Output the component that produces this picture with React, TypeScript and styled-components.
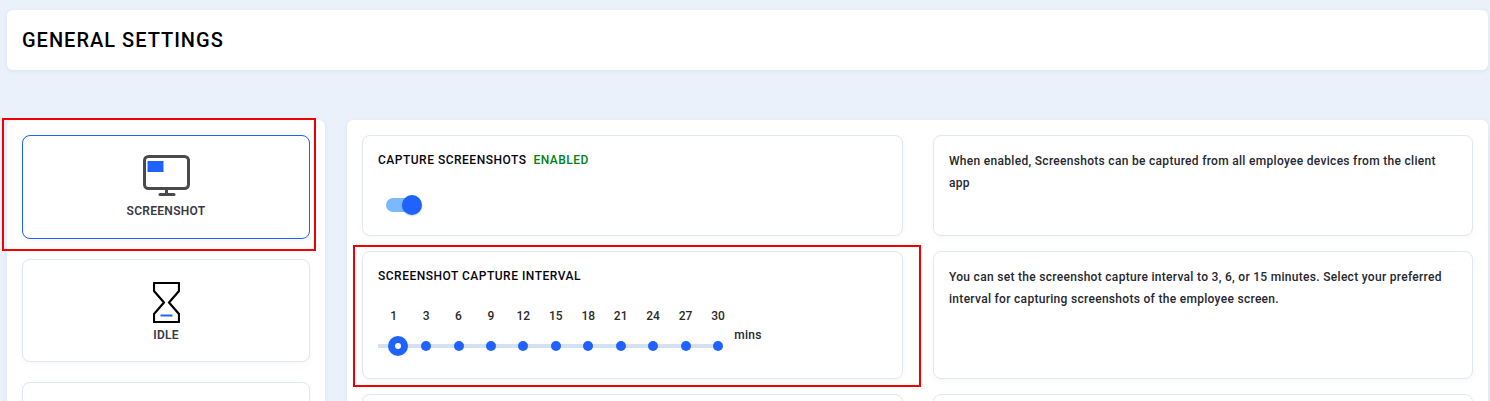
import React from 'react';
import styled, { createGlobalStyle } from 'styled-components';

const Global = createGlobalStyle`
  html, body { margin: 0; padding: 0; height: 401px; overflow: hidden; background: #eaf1fb; }
  body { font-family: Roboto, "Liberation Sans", sans-serif; }
  * { box-sizing: border-box; }
`;

const Page = styled.div`
  position: relative;
  padding: 10px 2px 0 7px;
  height: 401px;
  overflow: hidden;
`;

const Header = styled.header`
  height: 60px;
  background: #fff;
  border-radius: 6px;
  box-shadow: 0 1px 4px rgba(90, 120, 180, 0.12);
  display: flex;
  align-items: center;
  padding-left: 15px;
  margin-bottom: 50px;
`;

const Title = styled.h1`
  margin: 0;
  font-size: 20px;
  font-weight: 500;
  letter-spacing: 1px;
  color: #000;
`;

const Columns = styled.div`
  display: flex;
  gap: 22px;
  align-items: flex-start;
`;

const SidePanel = styled.aside`
  width: 318px;
  flex: none;
  background: #fff;
  border-radius: 6px;
  padding: 15px;
  display: flex;
  flex-direction: column;
  gap: 20px;
  box-shadow: 0 1px 4px rgba(90, 120, 180, 0.1);
`;

const NavCard = styled.div<{ $active?: boolean; $h: number; $pt: number }>`
  height: ${(p) => p.$h}px;
  padding-top: ${(p) => p.$pt}px;
  border: 1px solid ${(p) => (p.$active ? '#1f62ff' : '#e0e6f2')};
  border-radius: 8px;
  background: #fff;
  display: flex;
  flex-direction: column;
  align-items: center;
  box-shadow: 0 2px 6px rgba(90, 120, 180, 0.05);
`;

const NavLabel = styled.span<{ $mt: number }>`
  margin-top: ${(p) => p.$mt}px;
  font-size: 12px;
  line-height: 14px;
  font-weight: 600;
  letter-spacing: 0.3px;
  color: #3a3a3f;
`;

const MainPanel = styled.main`
  flex: 1;
  background: #fff;
  border-radius: 6px;
  padding: 15px;
  display: grid;
  grid-template-columns: 541px 540px;
  column-gap: 30px;
  row-gap: 15px;
  box-shadow: 0 1px 4px rgba(90, 120, 180, 0.1);
`;

const Card = styled.section<{ $h: number }>`
  height: ${(p) => p.$h}px;
  border: 1px solid #e0e6f2;
  border-radius: 8px;
  background: #fff;
  padding: 17px 15px 0;
  box-shadow: 0 2px 6px rgba(90, 120, 180, 0.05);
`;

const CardTitle = styled.div`
  display: flex;
  gap: 7px;
  font-size: 12px;
  line-height: 14px;
  font-weight: 500;
  letter-spacing: 0.5px;
  color: #050510;
`;

const Status = styled.span`
  color: #008018;
`;

const Description = styled.p`
  margin: -2px 0 0;
  font-size: 12px;
  line-height: 21.6px;
  font-weight: 500;
  letter-spacing: 0.3px;
  color: #26272f;
`;

const SwitchTrack = styled.div`
  position: relative;
  width: 32px;
  height: 14px;
  margin: 31px 0 0 8px;
  border-radius: 7px;
  background: #7ab8ff;
`;

const SwitchThumb = styled.div`
  position: absolute;
  left: 16px;
  top: -3px;
  width: 20px;
  height: 20px;
  border-radius: 50%;
  background: #1f62ff;
  box-shadow: 0 1px 2px rgba(0, 0, 0, 0.2);
`;

const SliderRow = styled.div`
  display: flex;
  align-items: flex-start;
  margin: 26px 0 0 -0.6px;
`;

const Marks = styled.div`
  display: flex;
  background: linear-gradient(#d6e0f3, #d6e0f3) no-repeat;
  background-size: 340px 4px;
  background-position: 0.6px 35px;
`;

const Mark = styled.div`
  width: 32.45px;
  display: flex;
  flex-direction: column;
  align-items: center;
`;

const MarkLabel = styled.span`
  font-size: 12px;
  line-height: 14px;
  font-weight: 500;
  color: #2d2a26;
`;

const MarkSlot = styled.div`
  height: 20px;
  margin-top: 13px;
  display: flex;
  align-items: center;
`;

const Dot = styled.div`
  width: 10px;
  height: 10px;
  border-radius: 50%;
  background: #1f62ff;
`;

const Thumb = styled.div`
  width: 20px;
  height: 20px;
  margin-left: 9px;
  border-radius: 50%;
  background: #1f62ff;
  display: flex;
  align-items: center;
  justify-content: center;
  &::after {
    content: '';
    width: 6px;
    height: 6px;
    border-radius: 50%;
    background: #fff;
  }
`;

const Unit = styled.span`
  margin-top: 19px;
  font-size: 12px;
  line-height: 14px;
  font-weight: 500;
  letter-spacing: 0.3px;
  color: #26272f;
`;

const Annotation = styled.div<{ $l: number; $t: number; $w: number; $h: number }>`
  position: absolute;
  left: ${(p) => p.$l}px;
  top: ${(p) => p.$t}px;
  width: ${(p) => p.$w}px;
  height: ${(p) => p.$h}px;
  border: 2px solid #f00000;
  pointer-events: none;
`;

const MonitorSvg = styled.svg`
  margin-left: 1px;
`;

const MonitorIcon = () => (
  <MonitorSvg width="48" height="42" viewBox="0 0 48 42" fill="none">
    <rect x="1.5" y="1.5" width="44" height="32" rx="4" stroke="#4a4a4a" strokeWidth="3" />
    <rect x="4.500" y="6" width="16" height="11" fill="#1f62ff" />
    <path d="M23.500 34v5" stroke="#4a4a4a" strokeWidth="3" />
    <path d="M17 39.500h14" stroke="#4a4a4a" strokeWidth="3" strokeLinecap="round" />
  </MonitorSvg>
);

const HourglassIcon = () => (
  <svg width="27" height="41" viewBox="0 0 27 41" fill="none">
    <path
      d="M1 1h25v8L16 20.500 26 32v8H1v-8l10-11.500L1 9V1z"
      stroke="#000"
      strokeWidth="2.200"
      strokeLinejoin="round"
    />
    <path d="M7.500 33.500h12" stroke="#1f62ff" strokeWidth="2" />
  </svg>
);

const intervals = [3, 6, 9, 12, 15, 18, 21, 24, 27, 30];

export default function App() {
  return (
    <Page>
      <Global />
      <Header>
        <Title>GENERAL SETTINGS</Title>
      </Header>
      <Columns>
        <SidePanel>
          <NavCard $active $h={104} $pt={19}>
            <MonitorIcon />
            <NavLabel $mt={7}>SCREENSHOT</NavLabel>
          </NavCard>
          <NavCard $h={103} $pt={22}>
            <HourglassIcon />
            <NavLabel $mt={5}>IDLE</NavLabel>
          </NavCard>
          <NavCard $h={103} $pt={22} />
        </SidePanel>
        <MainPanel>
          <Card $h={101}>
            <CardTitle>
              CAPTURE SCREENSHOTS <Status>ENABLED</Status>
            </CardTitle>
            <SwitchTrack>
              <SwitchThumb />
            </SwitchTrack>
          </Card>
          <Card $h={101}>
            <Description>
              When enabled, Screenshots can be captured from all employee devices from the client app
            </Description>
          </Card>
          <Card $h={128}>
            <CardTitle>SCREENSHOT CAPTURE INTERVAL</CardTitle>
            <SliderRow>
              <Marks>
                <Mark>
                  <MarkLabel>1</MarkLabel>
                  <MarkSlot>
                    <Thumb />
                  </MarkSlot>
                </Mark>
                {intervals.map((n) => (
                  <Mark key={n}>
                    <MarkLabel>{n}</MarkLabel>
                    <MarkSlot>
                      <Dot />
                    </MarkSlot>
                  </Mark>
                ))}
              </Marks>
              <Unit>mins</Unit>
            </SliderRow>
          </Card>
          <Card $h={128}>
            <Description>
              You can set the screenshot capture interval to 3, 6, or 15 minutes. Select your preferred interval for
              capturing screenshots of the employee screen.
            </Description>
          </Card>
          <Card $h={100} />
          <Card $h={100} />
        </MainPanel>
      </Columns>
      <Annotation $l={2} $t={118} $w={314} $h={133} />
      <Annotation $l={353} $t={245} $w={568} $h={142} />
    </Page>
  );
}
